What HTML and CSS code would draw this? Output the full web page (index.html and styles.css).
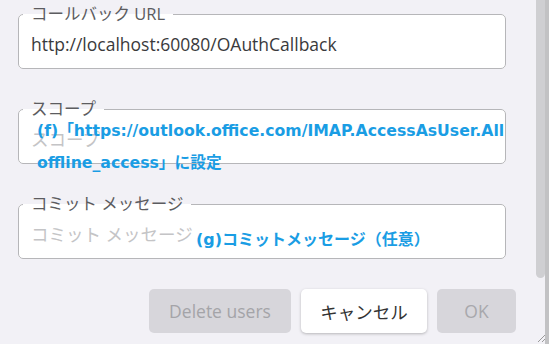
FILE: index.html
```html
<!DOCTYPE html>
<html lang="ja">
<head>
  <meta charset="UTF-8">
  <meta name="viewport" content="width=device-width, initial-scale=1.0">
  <title>OAuth 設定</title>
  <link rel="stylesheet" href="styles.css">
</head>
<body>
  <div class="page">
    <div class="content">
      <fieldset class="field">
        <legend>コールバック URL</legend>
        <div class="value">http://localhost:60080/OAuthCallback</div>
      </fieldset>

      <fieldset class="field">
        <legend>スコープ</legend>
        <div class="value placeholder">スコープ</div>
      </fieldset>

      <fieldset class="field">
        <legend>コミット メッセージ</legend>
        <div class="value placeholder">コミット メッセージ</div>
      </fieldset>

      <div class="actions">
        <button class="btn btn-delete" disabled>Delete users</button>
        <button class="btn btn-cancel">キャンセル</button>
        <button class="btn btn-ok" disabled>OK</button>
      </div>

      <div class="note note-f">(f)「https://outlook.office.com/IMAP.AccessAsUser.All<br>offline_access」に設定</div>
      <div class="note note-g">(g)コミットメッセージ（任意）</div>
    </div>

    <div class="scrollbar">
      <div class="thumb"></div>
      <div class="rail"></div>
    </div>

    <svg class="grip" width="10" height="10" viewBox="0 0 10 10">
      <path d="M9 2 L2 9 M9 6 L6 9" stroke="#9a9a9a" stroke-width="1" fill="none"/>
    </svg>
  </div>
</body>
</html>
```

FILE: styles.css
```css
body {
  margin: 0;
  background-color: #f2f1f6;
  font-family: 'Open Sans', 'Noto Sans CJK JP', sans-serif;
  color: #3c3c3c;
  overflow: hidden;
}
.page {
  display: flex;
  height: 344px;
  position: relative;
}
.content {
  width: 536px;
  padding: 4px 20px 0 18px;
  box-sizing: border-box;
  position: relative;
}
.field {
  margin: 0 10px 30px 0;
  padding: 0 0 12px 4px;
  border: 1px solid #b6b6b9;
  border-radius: 5px;
  background-color: #fff;
}
.field legend {
  padding: 0 8px;
  font-size: 16.5px;
  line-height: 20px;
  color: #5c5c60;
}
.value {
  margin-top: 8px;
  padding-left: 8px;
  font-size: 17.5px;
  line-height: 24px;
  color: #3a3a3c;
}
.value.placeholder {
  color: #c4c4c6;
}
.actions {
  display: flex;
  justify-content: flex-end;
  gap: 10px;
}
.btn {
  height: 44px;
  border: none;
  border-radius: 5px;
  font-family: inherit;
  font-size: 17.5px;
  padding: 0;
}
.btn-delete {
  width: 142px;
  background-color: #d7d6db;
  color: #a4a4a8;
}
.btn-cancel {
  width: 126px;
  background-color: #fff;
  color: #333;
  box-shadow: 0 1px 3px rgba(0,0,0,0.25);
}
.btn-ok {
  width: 79px;
  background-color: #d7d6db;
  color: #a8a8ac;
}
.note {
  position: absolute;
  font-family: 'DejaVu Sans', 'Noto Sans CJK JP', sans-serif;
  font-weight: bold;
  font-size: 15.7px;
  line-height: 32px;
  color: #1a9de4;
  white-space: nowrap;
}
.note-f {
  left: 37px;
  top: 115px;
}
.note-g {
  left: 196px;
  top: 224px;
  font-size: 16px;
}
.scrollbar {
  width: 13px;
  display: flex;
}
.thumb {
  width: 9px;
  height: 278px;
  background-color: #cfcfd2;
  border-radius: 0 0 5px 5px;
}
.rail {
  width: 4px;
  background-color: #c2c2c4;
}
.grip {
  position: absolute;
  right: 3px;
  bottom: 1px;
}
```
